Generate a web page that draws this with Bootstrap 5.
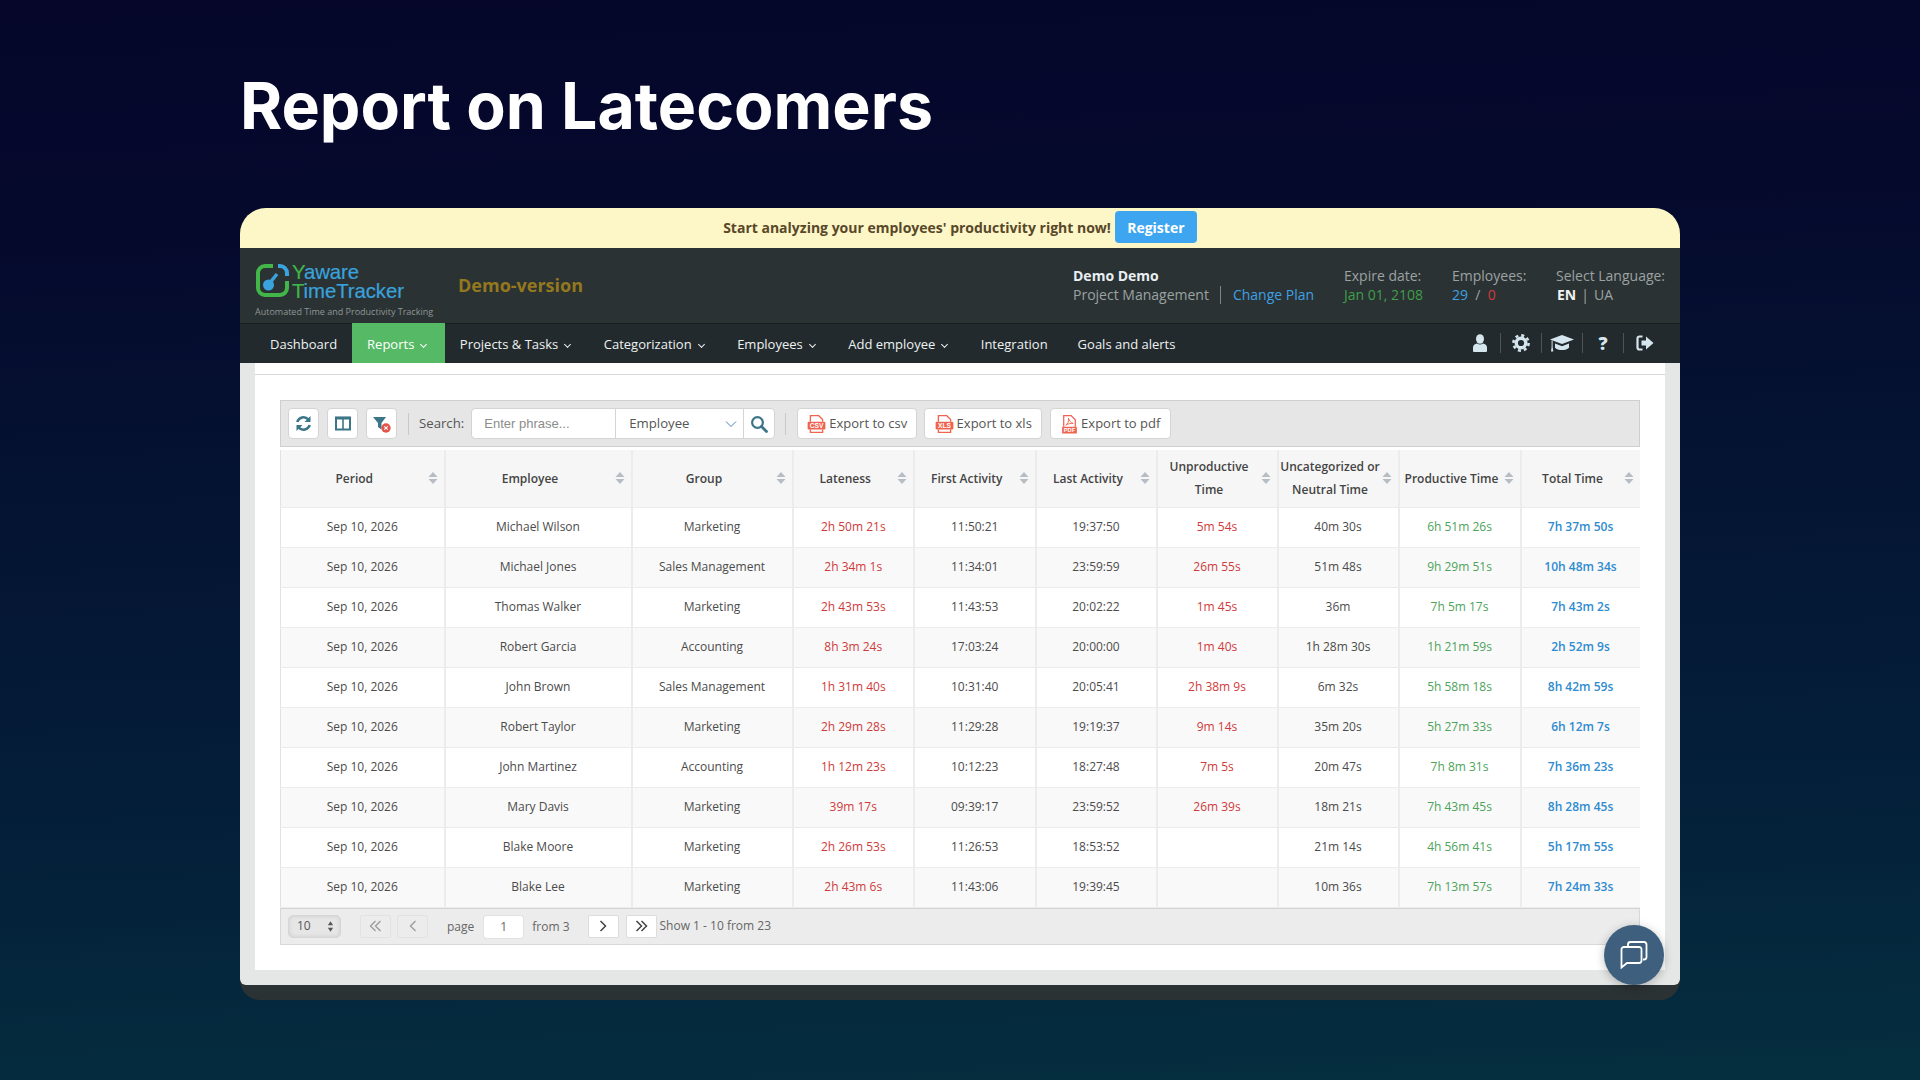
<!DOCTYPE html>
<html lang="en">
<head>
<meta charset="utf-8">
<title>Report on Latecomers</title>
<link rel="stylesheet" href="https://cdn.jsdelivr.net/npm/bootstrap@5.3.0/dist/css/bootstrap.min.css">
<style>
html,body{height:100%}
body{margin:0;width:1920px;height:1080px;overflow:hidden;font-family:"Open Sans",sans-serif;background:linear-gradient(178deg,#05062a 0%,#050a2d 22%,#04203a 75%,#052f3f 100%)}
.stage{width:1440px;margin:0 auto}
.hero-title{height:208px;margin:0;padding-top:66px;font-family:Inter,sans-serif;font-weight:700;font-size:64.4px;line-height:80px;color:#fff}
.app-win{position:relative;background:#2b3233;border-radius:26px 26px 20px 20px;height:792px;overflow:hidden}
.promo{height:40px;padding-bottom:2px;background:#fdf6c6;color:#58482a;font-weight:700;font-size:14px}
.promo .btn{width:82px;height:32px;margin-left:4px;padding:0;border:0;border-radius:4px;background:#3ea5f0;color:#fff;font-weight:700;font-size:14px}
.brandbar{height:75px;padding:0 15px;background:#2b3233;color:#9ba2a3;font-size:14px;line-height:19px}
.logo-col{width:203px;padding-top:15px}
.logo-mark{width:35px;height:35px;flex:none}
.logo-word{font-family:"Liberation Sans",sans-serif;font-size:20.4px;line-height:19px;color:#3aa2dc;margin-left:2px;letter-spacing:-.1px;-webkit-text-stroke:.2px currentColor}
.logo-word b{font-weight:400;color:#3fb54a}
.logo-tag{font-size:9px;line-height:12px;margin-top:5px;color:#8f9697;white-space:nowrap}
.demo-tag{font-weight:700;font-size:18px;color:#94781d}
.infobar{padding-bottom:2px}
.who{width:271px}.expire{width:108px}.staff{width:104px}.lang{width:109px;white-space:nowrap}
.who strong{color:#e9eff3;font-weight:700}
.sep-v{display:inline-block;width:1px;height:18px;background:#7e8687;vertical-align:-4px;margin:0 11.500px}
.c-blue{color:#3ea1e4}.c-green{color:#3f9f4b}.c-red{color:#d13b3b}
.lang strong{color:#f0f3f5;margin-left:1px}
.lang-bar{margin:0 5px}
.mainnav{height:40px;background:#222a2d;box-shadow:inset 0 1px 0 #191e20;padding:0 0 0 15px;flex-wrap:nowrap}
.mainnav .nav-link{height:40px;line-height:42px;padding:0 15px;color:#eef1f2;font-size:13px;white-space:nowrap}
.mainnav .nav-link.on{background:#56b965;color:#fff}
.chev::after{content:"";display:inline-block;width:5px;height:5px;margin:0 3.500px 2px 7px;border-right:1.1px solid currentColor;border-bottom:1.1px solid currentColor;transform:rotate(45deg)}
.nav-tools{margin-left:auto;margin-right:15px}
.nav-tools span{width:41px;height:20px;display:flex;align-items:center;justify-content:center;border-right:1px solid #4b5457;color:#d6e6ef;font-weight:800;font-size:18px;line-height:1}
.nav-tools span:last-child{border-right:0}
.canvas{height:622px;background:#e5e6e6;padding:0 15px 15px;border-radius:0 0 6px 6px}
.sheet{height:607px;background:#fff;padding:11px 25px 0}
.top-rule{height:1px;background:#d8d8d8;margin:0 -25px 25px}
.tools{height:47px;background:#e6e6e6;border:1px solid #cfcfcf;padding:0 7px;font-size:13.2px;color:#555}
.tool-btn{height:31px;padding:0;background:#fff;border:1px solid #d4d4d4;border-radius:4px;color:#555;font-size:13px;display:inline-flex;align-items:center;justify-content:center}
.tool-sq{width:31px;margin-right:8px}
.tool-div{width:1px;height:22px;background:#c9c9c9;margin:0 10px 0 3px}
.tools .input-group{width:306px;height:31px;margin-left:7px;flex-wrap:nowrap}
.tools .form-control{width:145px;flex:none;height:31px;padding:0 12px;font-family:"Liberation Sans",sans-serif;font-size:13px;border-color:#d4d4d4;border-radius:4px 0 0 4px;color:#777}
.tools .form-control::placeholder{color:#8c8c8c}
.tools .form-select{width:129px;flex:none;height:31px;padding:0 13px;font-size:13.2px;color:#555;border-color:#d4d4d4;border-radius:0;background-image:url("data:image/svg+xml,%3Csvg xmlns='http://www.w3.org/2000/svg' viewBox='0 0 12 8'%3E%3Cpath d='M1 1.500l5 5 5-5' fill='none' stroke='%234d7fb5' stroke-width='1'/%3E%3C/svg%3E");background-size:12px 8px;background-position:right 6px center}
.tools .tool-go{width:32px;border-radius:0 4px 4px 0;margin-left:-1px}
.exp-btn{padding:0;margin-right:7px}
.exp-a{width:120px;margin-left:3px}.exp-b{width:118px;margin-right:8px}.exp-c{width:121px}
.exp-btn svg{margin-right:3px}
.rep{table-layout:fixed;width:1359px;margin:3px 0 0;font-size:12px;color:#4b4b4b;border-collapse:collapse}
.rep th,.rep td{padding:0;text-align:center;vertical-align:middle;border:0;border-right:2px solid #ececec;border-bottom:1px solid #ececec}
.rep th:first-child,.rep td:first-child{border-left:1px solid #e2e2e2}
.rep th:last-child,.rep td:last-child{border-right:0}
.rep thead th{height:57px;background:#f6f6f6;font-weight:600;line-height:23px;color:#444;position:relative;padding:0 16px 0 0}
.rep tbody td{height:40px;background:#fff}
.rep tbody tr:nth-child(even) td{background:#f9f9f9}
.w1{width:164px}.w2{width:187px}.w3{width:161px}.w4,.w5{width:121.5px}.w6,.w7,.w8{width:121px}.w9{width:122px}.w10{width:119px}
.rep th.w8{padding:0 16px 0 0;white-space:nowrap}.rep th.w9{padding:0 16px 0 0;white-space:nowrap}
.sort-mark{position:absolute;right:6px;top:50%;margin-top:-7px;width:10px;height:14px}
.t-late{color:#cf3a3a}.t-prod{color:#4ca35a}.t-total{color:#2f8bd0;font-weight:600}
.pager{height:37px;margin-top:0;background:#ececec;border:1px solid #d8d8d8;border-top:1px solid #d4d4d4;padding:0 7px;font-size:12px;color:#666}
.pg-size{width:53px;height:23px;padding:0 0 0 8px;font-size:12px;color:#555;background-color:#e6e6e6;border:1px solid #d6d6d6;border-radius:5px;box-shadow:inset 0 0 4px rgba(0,0,0,.12);background-image:url("data:image/svg+xml,%3Csvg xmlns='http://www.w3.org/2000/svg' viewBox='0 0 8 14'%3E%3Cpath d='M4 1l3 4.500H1zM4 13l3-4.500H1z' fill='%23555'/%3E%3C/svg%3E");background-size:7px 13px;background-position:right 6px center}
.pg-btn{width:31px;height:23px;padding:0;background:#fff;border:1px solid #dcdcdc;border-radius:2px;display:inline-flex;align-items:center;justify-content:center}
.pg-btn.off{background:#ececec;border-color:#e2e2e2}
.pg-a{margin-left:19px;margin-right:6px}
.pg-word-a{margin:2px 9px 0 19px}
.pg-num{width:41px;height:24px;padding:0;text-align:center;font-size:12px;color:#666;border:1px solid #e2e2e2;border-radius:3px;margin-top:1px}
.pg-word-b{margin:2px 18px 0 8px}
.pg-next{margin-right:7px}
.pg-info{margin-left:3px}
.chat-fab{position:absolute;left:1364px;top:717px;width:60px;height:60px;border-radius:50%;background:#3e5f7e;box-shadow:0 2px 10px rgba(0,0,0,.25);display:flex;align-items:center;justify-content:center}
</style>
</head>
<body>
<main class="stage">
<h1 class="hero-title">Report on Latecomers</h1>
<section class="app-win">
  <div class="promo d-flex align-items-center justify-content-center">
    <span>Start analyzing your employees' productivity right now!</span>
    <button type="button" class="btn">Register</button>
  </div>
  <header class="brandbar d-flex">
    <div class="logo-col">
      <div class="d-flex">
        <svg class="logo-mark" viewBox="0 0 35 35"><path d="M18 3H10a7 7 0 0 0-7 7v15a7 7 0 0 0 7 7h15a7 7 0 0 0 7-7v-7" fill="none" stroke="#43b649" stroke-width="4"/><path d="M23 3h2a7 7 0 0 1 7 7v3" fill="none" stroke="#3aa2dc" stroke-width="4"/><circle cx="13.500" cy="22" r="5.500" fill="#3aa2dc"/><path d="M14 21l8-10" stroke="#3aa2dc" stroke-width="3.500"/></svg>
        <div class="logo-word"><b>Y</b>aware<br><b>T</b>imeTracker</div>
      </div>
      <div class="logo-tag">Automated Time and Productivity Tracking</div>
    </div>
    <div class="demo-tag d-flex align-items-center">Demo-version</div>
    <div class="ms-auto d-flex align-items-center infobar">
      <div class="who"><strong>Demo Demo</strong><br>Project Management<span class="sep-v"></span><span class="c-blue">Change Plan</span></div>
      <div class="expire">Expire date:<br><span class="c-green">Jan 01, 2108</span></div>
      <div class="staff">Employees:<br><span class="c-blue">29</span>&nbsp; / &nbsp;<span class="c-red">0</span></div>
      <div class="lang">Select Language:<br><strong>EN</strong><span class="lang-bar">|</span>UA</div>
    </div>
  </header>
  <nav class="nav mainnav align-items-center">
    <a class="nav-link" href="#">Dashboard</a>
    <a class="nav-link on chev" href="#">Reports</a>
    <a class="nav-link chev" href="#">Projects &amp; Tasks</a>
    <a class="nav-link chev" href="#">Categorization</a>
    <a class="nav-link chev" href="#">Employees</a>
    <a class="nav-link chev" href="#">Add employee</a>
    <a class="nav-link" href="#">Integration</a>
    <a class="nav-link" href="#">Goals and alerts</a>
    <div class="nav-tools d-flex align-items-center">
      <span><svg width="16" height="18" viewBox="0 0 16 18" fill="currentColor"><ellipse cx="8" cy="5" rx="4" ry="4.800"/><path d="M1 17v-3.500c0-2.300 1.800-3.500 4-4 1.800 1.300 4.200 1.300 6 0 2.200.5 4 1.700 4 4V17a1 1 0 0 1-1 1H2a1 1 0 0 1-1-1z"/></svg></span>
      <span><svg width="18" height="18" viewBox="0 0 18 18"><circle cx="9" cy="9" r="4.800" fill="none" stroke="currentColor" stroke-width="3.400"/><circle cx="9" cy="9" r="7.600" fill="none" stroke="currentColor" stroke-width="2.600" stroke-dasharray="3 2.970"/></svg></span>
      <span><svg width="26" height="19" viewBox="0 0 26 19" fill="currentColor"><path d="M13 1L25 5.500 13 10 1 5.500z"/><path d="M6 9.500l7 2.700 7-2.700v4.300c-1.500 1.500-4 2.300-7 2.300s-5.500-.8-7-2.300z"/><path d="M2.600 6.500h1v6.500l.7 4.500H2l.6-4.500z"/></svg></span>
      <span>?</span>
      <span><svg width="18" height="16" viewBox="0 0 18 16" fill="none"><path d="M6.500 1.500H3.500a2 2 0 0 0-2 2v9a2 2 0 0 0 2 2h3" stroke="currentColor" stroke-width="2.200"/><path d="M5.500 5.500H10V1.500L17.500 8 10 14.500v-4H5.500z" fill="currentColor"/></svg></span>
    </div>
  </nav>
  <div class="canvas">
    <div class="sheet">
      <div class="top-rule"></div>
      <div class="tools d-flex align-items-center">
        <button type="button" class="tool-btn tool-sq" aria-label="Refresh"><svg width="17" height="17" viewBox="0 0 17 17" fill="none" stroke="#3c7488" stroke-width="2.600"><path d="M2.300 7a6.400 6.400 0 0 1 11-2.500"/><path d="M14.700 10a6.400 6.400 0 0 1-11 2.500"/><path d="M15.500 1v6h-6z" fill="#3c7488" stroke="none"/><path d="M1.500 16v-6h6z" fill="#3c7488" stroke="none"/></svg></button>
        <button type="button" class="tool-btn tool-sq" aria-label="Columns"><svg width="16" height="15" viewBox="0 0 16 15" fill="none" stroke="#3c7488" stroke-width="2"><rect x="1" y="1.500" width="14" height="12"/><path d="M8 1v13" stroke-width="1.600"/><path d="M1 2.200h14" stroke-width="2.600"/></svg></button>
        <button type="button" class="tool-btn tool-sq" aria-label="Clear filter"><svg width="20" height="20" viewBox="0 0 20 20"><path d="M1 3h13L9.500 9v6.500L6 13V9z" fill="#3c7488"/><circle cx="14" cy="14" r="4.700" fill="#e5544b"/><path d="M12.300 12.300l3.400 3.400M15.700 12.300l-3.400 3.400" stroke="#fff" stroke-width="1.100"/></svg></button>
        <div class="tool-div"></div>
        <span>Search:</span>
        <div class="input-group">
          <input class="form-control" type="text" placeholder="Enter phrase...">
          <select class="form-select"><option>Employee</option></select>
          <button type="button" class="tool-btn tool-go" aria-label="Search"><svg width="18" height="18" viewBox="0 0 18 18" fill="none" stroke="#3c7488" stroke-width="2.200"><circle cx="7.500" cy="7.500" r="5.400"/><path d="M11.500 11.500l5 5" stroke-width="2.800" stroke-linecap="round"/></svg></button>
        </div>
        <div class="tool-div ms-2 me-2"></div>
        <button type="button" class="tool-btn exp-btn exp-a"><svg width="19" height="20" viewBox="0 0 17 18"><path d="M3 7V1.500h7.500L14 5v2M3 14v2.500h11V14" fill="none" stroke="#f0634f" stroke-width="1.200"/><rect x=".5" y="7" width="16" height="7" rx="1" fill="#f0634f"/><text x="8.500" y="12.700" font-family="Liberation Sans,sans-serif" font-size="6" font-weight="700" fill="#fff" text-anchor="middle">CSV</text></svg>Export to csv</button>
        <button type="button" class="tool-btn exp-btn exp-b"><svg width="19" height="20" viewBox="0 0 17 18"><path d="M3 7V1.500h7.500L14 5v2M3 14v2.500h11V14" fill="none" stroke="#f0634f" stroke-width="1.200"/><rect x=".5" y="7" width="16" height="7" rx="1" fill="#f0634f"/><text x="8.500" y="12.700" font-family="Liberation Sans,sans-serif" font-size="6" font-weight="700" fill="#fff" text-anchor="middle">XLS</text></svg>Export to xls</button>
        <button type="button" class="tool-btn exp-btn exp-c"><svg width="17" height="20" viewBox="0 0 16 19"><path d="M2.500 12V1.500h7L13.500 5.500V12" fill="none" stroke="#f0634f" stroke-width="1.200"/><path d="M4.500 10.500c2-1 3-4 2.500-6.500.8 2.500 2 4 4.500 5-2.500-.2-5 .3-7 1.500z" fill="none" stroke="#f0634f" stroke-width=".9"/><rect x="1" y="12" width="14" height="6.500" rx=".8" fill="#f0634f"/><text x="8" y="17.300" font-family="Liberation Sans,sans-serif" font-size="5.500" font-weight="700" fill="#fff" text-anchor="middle">PDF</text></svg>Export to pdf</button>
      </div>
      <table class="table rep">
        <thead>
          <tr>
            <th class="w1">Period<svg class="sort-mark" viewBox="0 0 10 14"><path d="M5 1l4.500 5h-9zM5 13l4.500-5h-9z" fill="#b7bdc4"/></svg></th>
            <th class="w2">Employee<svg class="sort-mark" viewBox="0 0 10 14"><path d="M5 1l4.500 5h-9zM5 13l4.500-5h-9z" fill="#b7bdc4"/></svg></th>
            <th class="w3">Group<svg class="sort-mark" viewBox="0 0 10 14"><path d="M5 1l4.500 5h-9zM5 13l4.500-5h-9z" fill="#b7bdc4"/></svg></th>
            <th class="w4">Lateness<svg class="sort-mark" viewBox="0 0 10 14"><path d="M5 1l4.500 5h-9zM5 13l4.500-5h-9z" fill="#b7bdc4"/></svg></th>
            <th class="w5">First Activity<svg class="sort-mark" viewBox="0 0 10 14"><path d="M5 1l4.500 5h-9zM5 13l4.500-5h-9z" fill="#b7bdc4"/></svg></th>
            <th class="w6">Last Activity<svg class="sort-mark" viewBox="0 0 10 14"><path d="M5 1l4.500 5h-9zM5 13l4.500-5h-9z" fill="#b7bdc4"/></svg></th>
            <th class="w7">Unproductive<br>Time<svg class="sort-mark" viewBox="0 0 10 14"><path d="M5 1l4.500 5h-9zM5 13l4.500-5h-9z" fill="#b7bdc4"/></svg></th>
            <th class="w8">Uncategorized or<br>Neutral Time<svg class="sort-mark" viewBox="0 0 10 14"><path d="M5 1l4.500 5h-9zM5 13l4.500-5h-9z" fill="#b7bdc4"/></svg></th>
            <th class="w9">Productive Time<svg class="sort-mark" viewBox="0 0 10 14"><path d="M5 1l4.500 5h-9zM5 13l4.500-5h-9z" fill="#b7bdc4"/></svg></th>
            <th class="w10">Total Time<svg class="sort-mark" viewBox="0 0 10 14"><path d="M5 1l4.500 5h-9zM5 13l4.500-5h-9z" fill="#b7bdc4"/></svg></th>
          </tr>
        </thead>
        <tbody>
          <tr><td>Sep 10, 2026</td><td>Michael Wilson</td><td>Marketing</td><td class="t-late">2h 50m 21s</td><td>11:50:21</td><td>19:37:50</td><td class="t-late">5m 54s</td><td>40m 30s</td><td class="t-prod">6h 51m 26s</td><td class="t-total">7h 37m 50s</td></tr>
          <tr><td>Sep 10, 2026</td><td>Michael Jones</td><td>Sales Management</td><td class="t-late">2h 34m 1s</td><td>11:34:01</td><td>23:59:59</td><td class="t-late">26m 55s</td><td>51m 48s</td><td class="t-prod">9h 29m 51s</td><td class="t-total">10h 48m 34s</td></tr>
          <tr><td>Sep 10, 2026</td><td>Thomas Walker</td><td>Marketing</td><td class="t-late">2h 43m 53s</td><td>11:43:53</td><td>20:02:22</td><td class="t-late">1m 45s</td><td>36m</td><td class="t-prod">7h 5m 17s</td><td class="t-total">7h 43m 2s</td></tr>
          <tr><td>Sep 10, 2026</td><td>Robert Garcia</td><td>Accounting</td><td class="t-late">8h 3m 24s</td><td>17:03:24</td><td>20:00:00</td><td class="t-late">1m 40s</td><td>1h 28m 30s</td><td class="t-prod">1h 21m 59s</td><td class="t-total">2h 52m 9s</td></tr>
          <tr><td>Sep 10, 2026</td><td>John Brown</td><td>Sales Management</td><td class="t-late">1h 31m 40s</td><td>10:31:40</td><td>20:05:41</td><td class="t-late">2h 38m 9s</td><td>6m 32s</td><td class="t-prod">5h 58m 18s</td><td class="t-total">8h 42m 59s</td></tr>
          <tr><td>Sep 10, 2026</td><td>Robert Taylor</td><td>Marketing</td><td class="t-late">2h 29m 28s</td><td>11:29:28</td><td>19:19:37</td><td class="t-late">9m 14s</td><td>35m 20s</td><td class="t-prod">5h 27m 33s</td><td class="t-total">6h 12m 7s</td></tr>
          <tr><td>Sep 10, 2026</td><td>John Martinez</td><td>Accounting</td><td class="t-late">1h 12m 23s</td><td>10:12:23</td><td>18:27:48</td><td class="t-late">7m 5s</td><td>20m 47s</td><td class="t-prod">7h 8m 31s</td><td class="t-total">7h 36m 23s</td></tr>
          <tr><td>Sep 10, 2026</td><td>Mary Davis</td><td>Marketing</td><td class="t-late">39m 17s</td><td>09:39:17</td><td>23:59:52</td><td class="t-late">26m 39s</td><td>18m 21s</td><td class="t-prod">7h 43m 45s</td><td class="t-total">8h 28m 45s</td></tr>
          <tr><td>Sep 10, 2026</td><td>Blake Moore</td><td>Marketing</td><td class="t-late">2h 26m 53s</td><td>11:26:53</td><td>18:53:52</td><td></td><td>21m 14s</td><td class="t-prod">4h 56m 41s</td><td class="t-total">5h 17m 55s</td></tr>
          <tr><td>Sep 10, 2026</td><td>Blake Lee</td><td>Marketing</td><td class="t-late">2h 43m 6s</td><td>11:43:06</td><td>19:39:45</td><td></td><td>10m 36s</td><td class="t-prod">7h 13m 57s</td><td class="t-total">7h 24m 33s</td></tr>
        </tbody>
      </table>
      <div class="pager d-flex align-items-center">
        <select class="form-select pg-size"><option>10</option></select>
        <button type="button" class="pg-btn off pg-a" aria-label="First"><svg width="13" height="12" viewBox="0 0 13 12" fill="none" stroke="#9a9a9a" stroke-width="1.300"><path d="M6.500 1l-5 5 5 5M11.500 1l-5 5 5 5"/></svg></button>
        <button type="button" class="pg-btn off" aria-label="Previous"><svg width="8" height="12" viewBox="0 0 8 12" fill="none" stroke="#9a9a9a" stroke-width="1.300"><path d="M6.500 1l-5 5 5 5"/></svg></button>
        <span class="pg-word-a">page</span>
        <input class="form-control pg-num" type="text" value="1">
        <span class="pg-word-b">from 3</span>
        <button type="button" class="pg-btn pg-next" aria-label="Next"><svg width="8" height="12" viewBox="0 0 8 12" fill="none" stroke="#444" stroke-width="1.500"><path d="M1.500 1l5 5-5 5"/></svg></button>
        <button type="button" class="pg-btn" aria-label="Last"><svg width="13" height="12" viewBox="0 0 13 12" fill="none" stroke="#444" stroke-width="1.500"><path d="M1.500 1l5 5-5 5M6.500 1l5 5-5 5"/></svg></button>
        <span class="pg-info">Show 1 - 10 from 23</span>
      </div>
    </div>
  </div>
  <div class="chat-fab"><svg width="28" height="28" viewBox="0 0 28 28" fill="none" stroke="#fff" stroke-width="1.800"><path d="M8 5V3.500A2.500 2.500 0 0 1 10.500 1H24a2.500 2.500 0 0 1 2.500 2.500V16a2.500 2.500 0 0 1-2.500 2.500h-1"/><path d="M4 6h15a2.500 2.500 0 0 1 2.500 2.500v11a2.500 2.500 0 0 1-2.500 2.500H7l-5.500 4.500V8.500A2.500 2.500 0 0 1 4 6z"/></svg></div>
</section>
</main>
<script src="https://cdn.jsdelivr.net/npm/bootstrap@5.3.0/dist/js/bootstrap.bundle.min.js"></script>
</body>
</html>
